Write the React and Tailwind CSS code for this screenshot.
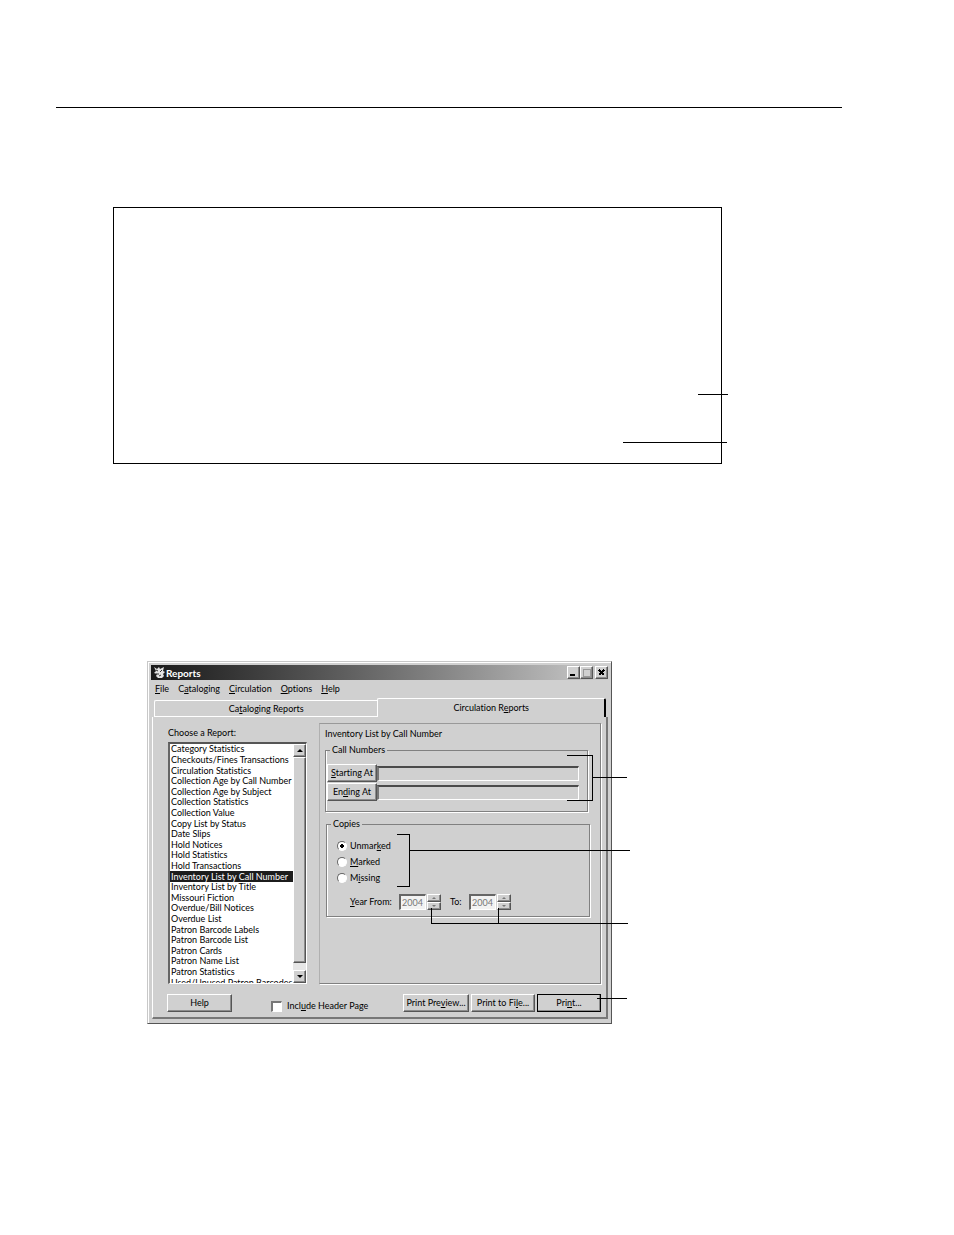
import React, { useState } from "react"

const reports = [
  "Category Statistics",
  "Checkouts/Fines Transactions",
  "Circulation Statistics",
  "Collection Age by Call Number",
  "Collection Age by Subject",
  "Collection Statistics",
  "Collection Value",
  "Copy List by Status",
  "Date Slips",
  "Hold Notices",
  "Hold Statistics",
  "Hold Transactions",
  "Inventory List by Call Number",
  "Inventory List by Title",
  "Missouri Fiction",
  "Overdue/Bill Notices",
  "Overdue List",
  "Patron Barcode Labels",
  "Patron Barcode List",
  "Patron Cards",
  "Patron Name List",
  "Patron Statistics",
  "Used/Unused Patron Barcodes",
]

// Underlines the shortcut letter, marked with "&" before it
const Hot = ({ text }) => {
  const at = text.indexOf("&")
  if (at < 0) return text
  return (
    <>
      {text.slice(0, at)}
      <u className="underline-offset-1">{text[at + 1]}</u>
      {text.slice(at + 2)}
    </>
  )
}

const raised =
  "border border-t-white border-l-white border-r-[#555] border-b-[#555] bg-[#d0d0d0] shadow-[inset_-1px_-1px_0_#8c8c8c]"

const PushButton = ({ text, className = "" }) => (
  <button
    type="button"
    className={`flex h-[18px] items-center justify-center whitespace-nowrap ${raised} ${className}`}
  >
    <span>
      <Hot text={text} />
    </span>
  </button>
)

const TitleButton = ({ label, children }) => (
  <button
    type="button"
    aria-label={label}
    className={`flex h-[13px] w-[13px] items-center justify-center ${raised}`}
  >
    <svg width="9" height="9" viewBox="0 0 9 9" shapeRendering="crispEdges">
      {children}
    </svg>
  </button>
)

const Arrow = ({ up, className = "" }) => (
  <svg width="6" height="3" viewBox="0 0 6 3" className={className}>
    <path d={up ? "M0 3L3 0L6 3Z" : "M0 0H6L3 3Z"} fill="currentColor" />
  </svg>
)

const Group = ({ legend, className = "", children }) => (
  <fieldset
    className={`border border-[#808080] px-1 shadow-[1px_1px_0_#fff,inset_1px_0_0_#fff] ${className}`}
  >
    <legend className="px-[2px] leading-[12px]">{legend}</legend>
    {children}
  </fieldset>
)

const CallNumberRow = ({ text }) => (
  <div className="mt-px flex items-center">
    <PushButton text={text} className="w-[50px] shrink-0" />
    <input
      type="text"
      aria-label={text.replace("&", "")}
      className="h-[15px] min-w-0 flex-1 border-t-2 border-r border-b border-l-2 border-t-[#4a4a4a] border-r-white border-b-white border-l-[#777] bg-[#d0d0d0] outline-none"
    />
  </div>
)

const YearField = ({ id, text, className }) => (
  <>
    <label htmlFor={id} className={className}>
      <Hot text={text} />
    </label>
    <input
      id={id}
      type="text"
      defaultValue="2004"
      disabled
      className="h-[16px] w-[27px] border-t-2 border-r border-b border-l-2 border-t-[#666] border-r-white border-b-white border-l-[#666] bg-[#f2f2f2] pl-px text-[9px] leading-[12px] text-[#777]"
    />
    <div className="ml-px flex h-[16px] w-[14px] flex-col text-[#777]">
      <button type="button" aria-label={`${id} up`} className={`flex flex-1 items-center justify-center ${raised}`}>
        <Arrow up className="h-[2px] w-[4px]" />
      </button>
      <button type="button" aria-label={`${id} down`} className={`flex flex-1 items-center justify-center ${raised}`}>
        <Arrow className="h-[2px] w-[4px]" />
      </button>
    </div>
  </>
)

const ReportList = () => {
  const [selected, setSelected] = useState("Inventory List by Call Number")

  return (
    <div className="flex h-[242px] w-[139px] border-t-2 border-r border-b border-l-2 border-t-[#555] border-r-white border-b-white border-l-[#666] bg-white">
      <div className="min-w-0 flex-1 overflow-hidden">
        <ul
          role="listbox"
          aria-labelledby="report-label"
          className="flex h-[244px] flex-col whitespace-nowrap"
        >
          {reports.map((name) => (
            <li
              key={name}
              role="option"
              aria-selected={name === selected}
              onClick={() => setSelected(name)}
              className={`flex flex-1 items-center pl-px leading-[10px] ${
                name === selected ? "bg-[#1c1c1c] text-white" : ""
              }`}
            >
              {name}
            </li>
          ))}
        </ul>
      </div>
      <div className="flex w-[13px] flex-col bg-[#e6e6e6]">
        <button type="button" aria-label="Scroll up" className={`flex h-[13px] items-center justify-center ${raised}`}>
          <Arrow up />
        </button>
        <div className={`h-[206px] ${raised}`} />
        <div className="flex-1" />
        <button type="button" aria-label="Scroll down" className={`flex h-[13px] items-center justify-center ${raised}`}>
          <Arrow />
        </button>
      </div>
    </div>
  )
}

const ReportsWindow = () => {
  const [copies, setCopies] = useState("Unmarked")

  return (
    <section className="relative border border-t-[#c8c8c8] border-r-[#555] border-b-[#555] border-l-[#c8c8c8] bg-[#d0d0d0] pt-[3px] pr-[3px] pb-[4px] pl-[3px] shadow-[inset_1px_1px_0_#fff]">
      <header className="flex h-[15px] items-center bg-linear-to-r from-[#1a1a1a] to-[#cccccc] pl-[2px] text-white">
        <svg width="13" height="13" viewBox="0 0 13 13">
          <path
            d="M1 1L4 3L6 1L7 3L11 1L10 5L12 6L10 8L11 10L9 12L5 12L3 10L4 8L1 7L3 5Z"
            fill="#e4e4e4"
          />
          <path d="M3 4L5 5M9 4L7 6M3 8L6 8M6 10L8 9" stroke="#333" fill="none" />
        </svg>
        <h1 className="flex-1 text-[10px] font-bold">Reports</h1>
        <div className="flex">
          <TitleButton label="Minimize">
            <path d="M1 7H6" stroke="#000" strokeWidth="2" />
          </TitleButton>
          <TitleButton label="Maximize">
            <path d="M1 1H8V8H1Z" stroke="#999" fill="none" />
          </TitleButton>
          <div className="ml-[2px]">
            <TitleButton label="Close">
              <path d="M2 2L7 7M7 2L2 7" stroke="#000" strokeWidth="1.5" />
            </TitleButton>
          </div>
        </div>
      </header>

      <nav className="flex h-[18px] items-center gap-[9px] pl-1">
        {["&File", "C&ataloging", "&Circulation", "&Options", "&Help"].map((item) => (
          <button key={item} type="button">
            <Hot text={item} />
          </button>
        ))}
      </nav>

      <div role="tablist" className="flex h-[19px] items-end pl-px">
        <button
          type="button"
          role="tab"
          aria-selected="false"
          className="ml-[2px] h-[17px] w-[49%] rounded-tl-xs border-t border-b border-l border-white"
        >
          <Hot text="Ca&taloging Reports" />
        </button>
        <button
          type="button"
          role="tab"
          aria-selected="true"
          className="mr-[2px] h-[19px] flex-1 rounded-t-xs border-t border-r-2 border-l border-t-white border-r-black border-l-white"
        >
          <Hot text="Circulation R&eports" />
        </button>
      </div>

      <div className="ml-px border-r-2 border-b-2 border-l border-r-[#777] border-b-[#777] border-l-white pt-[6px] pr-[5px] pb-[5px] pl-[15px]">
        <div className="flex gap-[12px]">
          <div>
            <p id="report-label" className="h-[19px] leading-[20px]">
              Choose a Report:
            </p>
            <ReportList />
          </div>

          <main className="flex-1 border border-t-[#999] border-r-[#808080] border-b-[#808080] border-l-[#b0b0b0] px-[5px] shadow-[1px_1px_0_#fff]">
            <h2 className="h-[20px] leading-[20px]">Inventory List by Call Number</h2>
            <Group legend="Call Numbers" className="mr-[7px] h-[68px]">
              <div className="-ml-[3px] pt-[7px] pr-[4px]">
                <CallNumberRow text="&Starting At" />
                <CallNumberRow text="En&ding At" />
              </div>
            </Group>

            <Group legend="Copies" className="mt-[6px] mr-[5px] ml-px h-[99px]">
              <div className="flex flex-col gap-[3px] pt-[9px] pl-[6px]">
                {["Unmar&ked", "&Marked", "M&issing"].map((item) => {
                  const value = item.replace("&", "")
                  return (
                    <label key={item} className="flex h-[13px] items-center gap-[3px]">
                      <input
                        type="radio"
                        name="copies"
                        checked={copies === value}
                        onChange={() => setCopies(value)}
                        className="h-[10px] w-[10px] appearance-none rounded-full border border-t-[#666] border-r-white border-b-white border-l-[#666] bg-white checked:bg-[radial-gradient(circle,#000_0_2px,#fff_2px)]"
                      />
                      <span>
                        <Hot text={item} />
                      </span>
                    </label>
                  )
                })}
              </div>
              <div className="mt-[10px] flex items-center pl-[19px]">
                <YearField id="year-from" text="&Year From:" className="w-[49px]" />
                <YearField id="year-to" text="To:" className="ml-[9px] w-[19px]" />
              </div>
            </Group>
          </main>
        </div>

        <footer className="-ml-px mt-[10px] flex items-center">
          <PushButton text="Help" className="w-[65px]" />
          <label className="mt-[6px] ml-[39px] flex flex-1 items-center gap-[5px]">
            <input
              type="checkbox"
              className="h-[11px] w-[11px] appearance-none border-t-2 border-r border-b border-l-2 border-t-[#777] border-r-white border-b-white border-l-[#777] bg-white"
            />
            <span>
              <Hot text="Incl&ude Header Page" />
            </span>
          </label>
          <div className="flex gap-[2px]">
            <PushButton text="Print Pre&view..." className="w-[66px]" />
            <PushButton text="Print to Fi&le..." className="w-[64px]" />
            <PushButton text="Pri&nt..." className="w-[64px] outline -outline-offset-1 outline-black" />
          </div>
        </footer>
      </div>

      {/* callout brackets, drawn over the window */}
      <svg
        className="pointer-events-none absolute -top-px -left-px overflow-visible"
        width="490"
        height="364"
        fill="none"
        stroke="#000"
        shapeRendering="crispEdges"
      >
        <path d="M420 94.5H445.5V139.5H420M445 116.5H480" />
        <path d="M250 173.5H262.5V225.5H250M262 189.5H483" />
        <path d="M284.5 247V262.5H481M351.5 247V262" />
        <path d="M450 337.5H480" />
      </svg>
    </section>
  )
}

const App = () => (
  <div className="bg-white pt-[107px] pb-[211px] font-['Lato',sans-serif] text-[9px] leading-[12px] text-black [font-variant-ligatures:none]">
    <hr className="mr-[112px] ml-[56px] border-t border-black" />

    <div className="relative mt-[99px] mr-[232px] ml-[113px] h-[257px] border border-black">
      <svg
        className="absolute right-0 bottom-0 overflow-visible"
        width="100"
        height="70"
        stroke="#000"
        shapeRendering="crispEdges"
      >
        <path d="M77 1.5H107M2 49.5H106" />
      </svg>
    </div>

    <div className="mt-[197px] mr-[342px] ml-[147px]">
      <ReportsWindow />
    </div>
  </div>
)

export default App
